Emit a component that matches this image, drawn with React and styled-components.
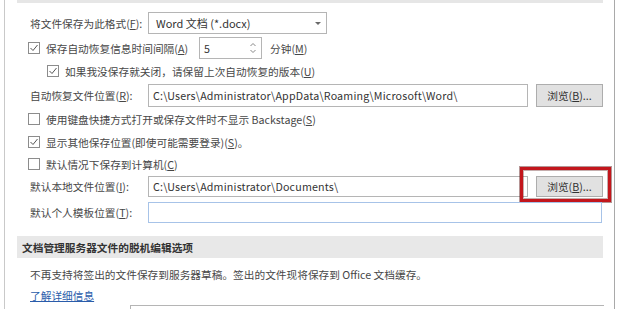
import React from 'react';
import styled, { createGlobalStyle } from 'styled-components';

const Global = createGlobalStyle`
  html, body {
    margin: 0;
    background: #fff;
  }
  body {
    font-family: "Noto Sans CJK SC", "Noto Sans", sans-serif;
    font-size: 10.7px;
    color: #474747;
  }
`;

const Frame = styled.div`
  width: 620px;
  height: 309px;
  overflow: hidden;
  padding-left: 4px;
  box-sizing: border-box;
`;

const Panel = styled.div`
  width: 611px;
  height: 309px;
  border-left: 1px solid #c9c9c9;
  border-right: 1px solid #a9a9a9;
  box-sizing: border-box;
  display: flex;
  flex-direction: column;
`;

const HeaderStub = styled.div`
  margin-left: 12px;
  width: 586px;
  height: 3px;
  background: #e6e6e6;
  flex: none;
`;

const Row = styled.div`
  display: flex;
  align-items: center;
  flex: none;
  height: ${p => p.$h}px;
  margin-top: ${p => p.$mt || 0}px;
  padding-left: ${p => p.$pl || 25}px;
  white-space: nowrap;
`;

const Label = styled.span`
  width: 118px;
  flex: none;
`;

const Field = styled.div`
  height: ${p => p.$h || 22}px;
  width: ${p => p.$w}px;
  flex: none;
  box-sizing: border-box;
  border: 1px solid ${p => (p.$focus ? '#a7c3e8' : '#b5b5b5')};
  background: #fff;
  display: flex;
  align-items: center;
  padding-left: 4px;
  color: #333;
  letter-spacing: 0.18px;
  position: relative;
`;

const SelectBox = styled(Field)`
  padding-left: 7px;
  font-size: 11px;
  letter-spacing: 0;
  color: #333;
`;

const Caret = styled.span`
  position: absolute;
  right: 5px;
  top: 9px;
  width: 0;
  height: 0;
  border-left: 3px solid transparent;
  border-right: 3px solid transparent;
  border-top: 3px solid #6a6a6a;
`;

const Spin = styled.svg`
  position: absolute;
  right: 4px;
  top: 3px;
`;

const Button = styled.div`
  position: relative;
  margin-left: 8px;
  width: 67px;
  height: ${p => p.$h || 23}px;
  flex: none;
  box-sizing: border-box;
  background: #e1e1e1;
  border: 1px solid #adadad;
  display: flex;
  align-items: center;
  justify-content: center;
  color: #333;
`;

const Highlight = styled.div`
  position: absolute;
  left: -17px;
  right: -9px;
  top: -10px;
  bottom: -6px;
  border: 3px solid #c3161c;
  box-shadow: 0 0 0 1px rgba(90, 20, 20, 0.45), inset 0 0 0 1px rgba(90, 20, 20, 0.35);
  pointer-events: none;
`;

const Box = styled.span`
  width: 12px;
  height: 12px;
  flex: none;
  box-sizing: border-box;
  border: 1px solid #8c8c8c;
  background: #fff;
  margin-right: 6px;
  display: flex;
  align-items: center;
  justify-content: center;
`;

const Unit = styled.span`
  margin-left: 8px;
`;

const SectionBar = styled.div`
  margin-left: 12px;
  width: 586px;
  height: 22px;
  margin-top: 13px;
  flex: none;
  background: #e8e8e8;
  display: flex;
  align-items: center;
  padding-left: 5px;
  box-sizing: border-box;
  font-weight: bold;
  color: #333;
`;

const Link = styled.a`
  color: #2a5caa;
  text-decoration: underline;
  cursor: pointer;
`;

const BottomField = styled.div`
  margin-left: 125px;
  width: 473px;
  height: 10px;
  border-top: 1px solid #b5b5b5;
  border-left: 1px solid #b5b5b5;
  flex: none;
`;

const Check = ({ checked }) => (
  <Box>
    {checked && (
      <svg width="10" height="10" viewBox="0 0 10 10">
        <polyline points="1.5,5 4,7.5 8.5,2" fill="none" stroke="#555" strokeWidth="1" />
      </svg>
    )}
  </Box>
);

const App = () => {
  return (
    <>
      <Global />
      <Frame>
        <Panel>
          <HeaderStub />

          <Row $h={22} $mt={9}>
            <Label>将文件保存为此格式(<u>F</u>):</Label>
            <SelectBox $w={179}>
              Word 文档 (*.docx)
              <Caret />
            </SelectBox>
          </Row>

          <Row $h={22} $mt={3} $pl={23}>
            <Check checked />
            <span style={{ width: 153 }}>保存自动恢复信息时间间隔(<u>A</u>)</span>
            <Field $w={63}>
              5
              <Spin width="8" height="14" viewBox="0 0 8 14">
                <polyline points="1.5,5 4,2.5 6.5,5" fill="none" stroke="#888" strokeWidth="1" />
                <polyline points="1.5,9 4,11.5 6.5,9" fill="none" stroke="#888" strokeWidth="1" />
              </Spin>
            </Field>
            <Unit>分钟(<u>M</u>)</Unit>
          </Row>

          <Row $h={24} $pl={42}>
            <Check checked />
            <span>如果我没保存就关闭，请保留上次自动恢复的版本(<u>U</u>)</span>
          </Row>

          <Row $h={23} $mt={1}>
            <Label>自动恢复文件位置(<u>R</u>):</Label>
            <Field $w={380} $h={23}>C:\Users\Administrator\AppData\Roaming\Microsoft\Word\</Field>
            <Button>浏览(<u>B</u>)...</Button>
          </Row>

          <Row $h={24} $pl={23}>
            <Check />
            <span>使用键盘快捷方式打开或保存文件时不显示 Backstage(<u>S</u>)</span>
          </Row>

          <Row $h={22} $pl={23}>
            <Check checked />
            <span>显示其他保存位置(即使可能需要登录)(<u>S</u>)。</span>
          </Row>

          <Row $h={22} $pl={23}>
            <Check />
            <span>默认情况下保存到计算机(<u>C</u>)</span>
          </Row>

          <Row $h={21} $mt={1}>
            <Label>默认本地文件位置(<u>I</u>):</Label>
            <Field $w={380} $h={21}>C:\Users\Administrator\Documents\</Field>
            <Button $h={21}>
              浏览(<u>B</u>)...
              <Highlight />
            </Button>
          </Row>

          <Row $h={21} $mt={5}>
            <Label>默认个人模板位置(<u>T</u>):</Label>
            <Field $w={454} $h={21} $focus />
          </Row>

          <SectionBar>文档管理服务器文件的脱机编辑选项</SectionBar>

          <Row $h={22} $mt={5}>
            <span>不再支持将签出的文件保存到服务器草稿。签出的文件现将保存到 Office 文档缓存。</span>
          </Row>

          <Row $h={20}>
            <Link>了解详细信息</Link>
          </Row>

          <BottomField />
        </Panel>
      </Frame>
    </>
  );
};

export default App;
